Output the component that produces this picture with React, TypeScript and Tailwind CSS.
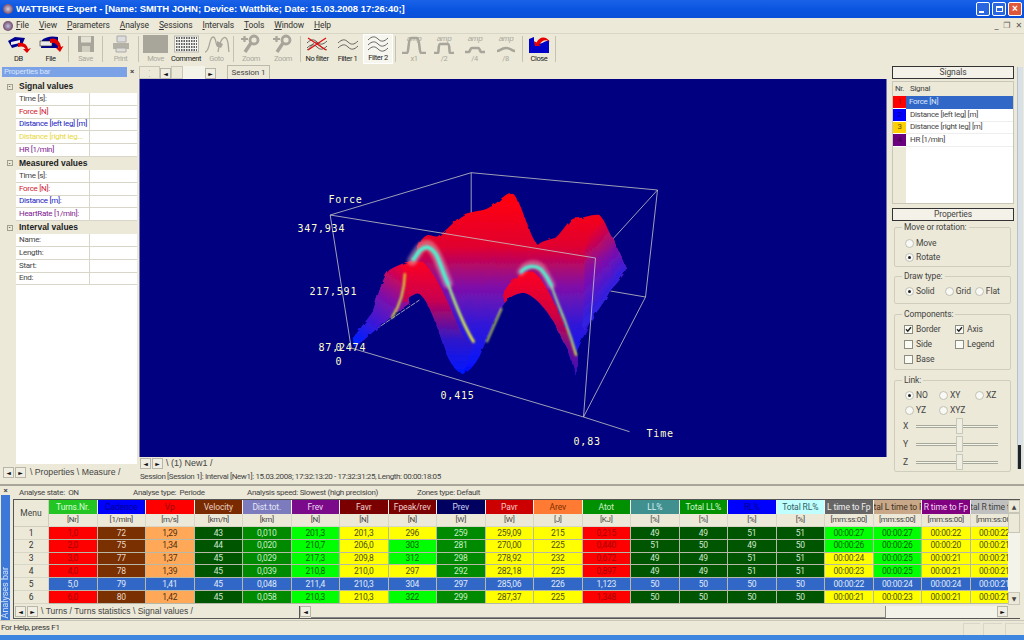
import React from "react";

const sans = "font-['Liberation_Sans',sans-serif] tracking-normal";

type Cell = { v: string; k: string };

const colours: Record<string, string> = {
  r: "bg-[#ff0000] text-[#a80000]",
  b: "bg-[#7a3000] text-[#e8d8c8]",
  o: "bg-[#ffa858] text-[#503010]",
  d: "bg-[#005500] text-[#d0e8d0]",
  g: "bg-[#008a00] text-[#c8f0c8]",
  l: "bg-[#00ff00] text-[#006000]",
  y: "bg-[#ffff00] text-[#505000]",
  s: "bg-[#3168c8] text-[#e0e8f8]",
};

const headers = [
  ["Turns.Nr.", "[Nr]", "bg-[#22c522] text-[#d8ffd8]"],
  ["Cadence", "[1/min]", "bg-[#0000ff] text-[#000090]"],
  ["Vp", "[m/s]", "bg-[#ff0000] text-[#a00000]"],
  ["Velocity", "[km/h]", "bg-[#7a2a00] text-[#e8d0c0]"],
  ["Dist.tot.", "[km]", "bg-[#7b7bbd] text-[#e8e8f8]"],
  ["Frev", "[N]", "bg-[#7a0a8a] text-[#f0d8f0]"],
  ["Favr", "[N]", "bg-[#7a0000] text-[#f0d0d0]"],
  ["Fpeak/rev", "[N]", "bg-[#7a0000] text-[#f0d0d0]"],
  ["Prev", "[W]", "bg-[#000060] text-[#d0d0f0]"],
  ["Pavr", "[W]", "bg-[#cc0000] text-[#f8c8c8]"],
  ["Arev", "[J]", "bg-[#ff7a33] text-[#803000]"],
  ["Atot", "[KJ]", "bg-[#009000] text-[#c8f0c8]"],
  ["LL%", "[%]", "bg-[#409090] text-[#d8f0f0]"],
  ["Total LL%", "[%]", "bg-[#009000] text-[#d0f8d0]"],
  ["RL%", "[%]", "bg-[#0000ff] text-[#000090]"],
  ["Total RL%", "[%]", "bg-[#c0ffff] text-[#306060]"],
  ["L time to Fp", "[mm:ss:00]", "bg-[#666666] text-[#f0f0f0]"],
  ["total L time to Fp", "[mm:ss:00]", "bg-[#c8a888] text-[#403020]"],
  ["R time to Fp", "[mm:ss:00]", "bg-[#800080] text-[#f0d8f0]"],
  ["total R time to Fp", "[mm:ss:00]", "bg-[#c0c0c0] text-[#404040]"],
];

const rowData: string[] = [
  "1,0:r 72:b 1,29:o 43:d 0,010:g 201,3:l 201,3:y 296:y 259:g 259,09:y 215:y 0,215:r 49:d 49:d 51:d 51:d 00.00.27:l 00.00.27:l 00.00.22:y 00.00.22:y",
  "2,0:r 75:b 1,34:o 44:d 0,020:g 210,7:l 206,0:y 303:l 281:g 270,00:y 225:y 0,440:r 51:d 50:d 49:d 50:d 00.00.26:l 00.00.26:l 00.00.20:y 00.00.21:y",
  "3,0:r 77:b 1,37:o 45:d 0,029:g 217,3:l 209,8:y 312:l 298:g 278,92:y 232:y 0,672:r 49:d 49:d 51:d 51:d 00.00.24:y 00.00.25:l 00.00.21:y 00.00.21:y",
  "4,0:r 78:b 1,39:o 45:d 0,039:g 210,8:l 210,0:y 297:y 292:g 282,18:y 225:y 0,897:r 49:d 49:d 51:d 51:d 00.00.23:y 00.00.25:l 00.00.21:y 00.00.21:y",
  "5,0:s 79:s 1,41:s 45:s 0,048:s 211,4:s 210,3:s 304:s 297:s 285,06:s 226:s 1,123:s 50:s 50:s 50:s 50:s 00.00.22:s 00.00.24:s 00.00.24:s 00.00.21:s",
  "6,0:r 80:b 1,42:o 45:d 0,058:g 210,3:l 210,3:y 322:l 299:g 287,37:y 225:y 1,348:r 50:d 50:d 50:d 50:d 00.00.21:y 00.00.23:y 00.00.21:y 00.00.21:y",
];

const rows: Cell[][] = rowData.map((r) =>
  r.split(" ").map((c) => {
    const [v, k] = c.split(":");
    return { v: v.replace(/\./g, ":"), k };
  })
);

function Radio({ on, label, w }: { on?: boolean; label: string; w: string }) {
  return (
    <div className={`flex items-center ${w}`}>
      <span className="flex h-[9px] w-[9px] shrink-0 items-center justify-center rounded-full border border-[#c0c0b4] bg-[#f8f8f4]">
        {on && <span className="h-[3px] w-[3px] rounded-full bg-[#222]" />}
      </span>
      <span className="ml-[2px]">{label}</span>
    </div>
  );
}

function Check({ on, label, w }: { on?: boolean; label: string; w: string }) {
  return (
    <div className={`flex items-center ${w}`}>
      <span className="flex h-[9px] w-[9px] shrink-0 items-center justify-center border border-[#8c8c80] bg-[#fbfbf6]">
        {on && (
          <svg width="7" height="7" viewBox="0 0 7 7">
            <path d="M1 3.2 L2.8 5.2 L6 1.2" fill="none" stroke="#222" strokeWidth="1.4" />
          </svg>
        )}
      </span>
      <span className="ml-[3px]">{label}</span>
    </div>
  );
}

function Group({ title, className, children }: { title: string; className: string; children: React.ReactNode }) {
  return (
    <fieldset className={`min-w-0 rounded-[2px] border border-[#cfcdbc] px-[8px] ${className}`}>
      <legend className="ml-[-1px] px-[2px] leading-[9px]">{title}</legend>
      {children}
    </fieldset>
  );
}

function Slider({ label }: { label: string }) {
  return (
    <div className="flex h-[18px] items-center">
      <span className="w-[13px]">{label}</span>
      <div className="relative h-[3px] flex-1 border-y border-y-[#a8a898] bg-[#f4f4ee]">
        <span className="absolute left-[40px] top-[-8px] h-[16px] w-[7px] border border-[#c8c8b8] bg-[#f0eee2]" />
      </div>
    </div>
  );
}

function Arrow({ dir }: { dir: "l" | "r" }) {
  return (
    <span className="flex h-[11px] w-[11px] shrink-0 items-center justify-center border border-[#b8b6a6] bg-[#f0eee2] font-['DejaVu_Sans'] text-[6px] leading-none text-[#111]">
      {dir === "l" ? "◄" : "►"}
    </span>
  );
}

function Blob() {
  return (
    <svg width="26" height="20" viewBox="0 0 26 20">
      <path d="M2 7 L9 3 L19 4 L16 11 L6 14 Z" fill="#000090" />
      <path d="M5 8 L14 6 L14 9 L5 11 Z" fill="#f0f0f0" />
      <path d="M12 9 C17 8 21 10 22 15 L25 14 L21 19 L17 15 L19.5 15 C18 12 15 12 12 13 Z" fill="#e00000" />
    </svg>
  );
}

function FileBlob() {
  return (
    <svg width="26" height="20" viewBox="0 0 26 20">
      <path d="M4 6 Q10 1 20 3 L20 14 L3 14 Z" fill="#000090" />
      <rect x="2" y="7" width="12" height="5" fill="#e8e8e8" stroke="#222" strokeWidth="0.6" />
      <path d="M12 5 C18 3 22 7 23 13 L25.5 12 L22 18 L18 14 L20.5 13.5 C19 10 16 8 12 9 Z" fill="#e00000" />
    </svg>
  );
}

function Wave({ n, cross }: { n: number; cross?: boolean }) {
  const ys = n === 2 ? [6, 11] : [3, 8, 13];
  return (
    <svg width="24" height="18" viewBox="0 0 24 18">
      {ys.map((y) => (
        <path key={y} d={`M2 ${y + 2} C6 ${y - 2} 9 ${y - 2} 12 ${y + 1} S18 ${y + 4} 22 ${y}`} fill="none" stroke={cross ? "#4a4a4a" : "#555"} strokeWidth="0.9" />
      ))}
      {cross && (
        <>
          <path d="M2 15 C7 13 8 5 12 8 S18 14 22 15" fill="none" stroke="#444" strokeWidth="0.8" />
          <path d="M3 3 L21 15 M3 15 L21 3" stroke="#e01010" strokeWidth="1.3" />
        </>
      )}
    </svg>
  );
}

function Amp({ d }: { d: string }) {
  return (
    <svg width="30" height="20" viewBox="0 0 30 20">
      <text x="15" y="7" textAnchor="middle" fontSize="8" fontStyle="italic" fontFamily="Liberation Sans" fill="#a8a69a">amp</text>
      <path d={d} fill="none" stroke="#a8a69a" strokeWidth="2.6" />
    </svg>
  );
}

function ZoomIcon() {
  return (
    <svg width="24" height="20" viewBox="0 0 24 20">
      <circle cx="15" cy="6" r="4" fill="none" stroke="#a8a69a" strokeWidth="2.8" />
      <path d="M12 9 L6 18" stroke="#a8a69a" strokeWidth="3.4" />
      <path d="M2 5 H9 M5.5 2 V8" stroke="#a8a69a" strokeWidth="2.2" />
    </svg>
  );
}

const tools: { label: string; w: string; dim?: boolean; active?: boolean; sep?: string; icon: React.ReactNode }[] = [
  { label: "DB", w: "w-[31px]", icon: <Blob /> },
  { label: "File", w: "w-[33px]", sep: "mx-[1px]", icon: <FileBlob /> },
  {
    label: "Save", w: "w-[31px]", dim: true, sep: "mx-[1px]",
    icon: (
      <svg width="20" height="20" viewBox="0 0 20 20">
        <path d="M2 2 H18 V18 H2 Z" fill="#a8a69a" />
        <rect x="5" y="2.5" width="10" height="6" fill="#e4e2d4" />
        <rect x="6" y="12" width="8" height="6" fill="#d0cebf" />
      </svg>
    ),
  },
  {
    label: "Print", w: "w-[33px]", dim: true, sep: "mx-[1px]",
    icon: (
      <svg width="20" height="20" viewBox="0 0 20 20">
        <path d="M6 2 H15 V8 H6 Z" fill="#ddd" stroke="#aaa" />
        <path d="M2 9 H18 V15 H2 Z" fill="#b4b2a6" />
        <path d="M5 14 H15 V18 H5 Z" fill="#e0dfd6" stroke="#aaa" />
      </svg>
    ),
  },
  { label: "Move", w: "w-[31px]", dim: true, icon: <span className="block h-[18px] w-[25px] bg-[#a8a69a]" /> },
  {
    label: "Comment", w: "w-[30px]",
    icon: (
      <svg width="25" height="18" viewBox="0 0 25 18">
        <rect x="0.5" y="1" width="24" height="16" fill="#f4f4f0" stroke="#b8b8b0" />
        {[3, 6, 9, 12, 15].map((y) => (
          <path key={y} d={`M2 ${y} H23`} stroke="#333" strokeWidth="1.4" strokeDasharray="1.5 1" />
        ))}
      </svg>
    ),
  },
  {
    label: "Goto", w: "w-[31px]", dim: true, sep: "mx-[1px]",
    icon: (
      <svg width="26" height="20" viewBox="0 0 26 20">
        <path d="M1 18 C6 18 5 3 9 3 C13 3 11 14 15 12 M14 18 C16 5 20 2 22 4 C25 7 24 14 25 18" fill="none" stroke="#a8a69a" strokeWidth="1.3" />
        <path d="M13 7 L19 10 L17 14 L13 12 Z" fill="#a8a69a" />
      </svg>
    ),
  },
  { label: "Zoom", w: "w-[32px]", dim: true, icon: <ZoomIcon /> },
  { label: "Zoom", w: "w-[32px]", dim: true, sep: "mx-[1px]", icon: <ZoomIcon /> },
  { label: "No filter", w: "w-[30px]", icon: <Wave n={2} cross /> },
  { label: "Filter 1", w: "w-[31px]", icon: <Wave n={2} /> },
  { label: "Filter 2", w: "w-[30px]", active: true, sep: "ml-[2px] mr-[3px]", icon: <Wave n={3} /> },
  { label: "x1", w: "w-[30px]", dim: true, icon: <Amp d="M3 19 H8 C10 19 9 4 12 4 H18 C21 4 20 19 22 19 H27" /> },
  { label: "/2", w: "w-[30px]", dim: true, icon: <Amp d="M5 19 H9 C10 19 9 10 11 10 H19 C21 10 20 19 21 19 H25" /> },
  { label: "/4", w: "w-[31px]", dim: true, icon: <Amp d="M5 18 H9 C10 18 10 14 12 14 H18 C20 14 20 18 21 18 H25" /> },
  { label: "/8", w: "w-[31px]", dim: true, sep: "mx-[1px]", icon: <Amp d="M6 17 C9 17 10 14 15 14 C20 14 21 17 24 17" /> },
  {
    label: "Close", w: "w-[30px]", sep: "mx-[1px]",
    icon: (
      <svg width="24" height="20" viewBox="0 0 24 20">
        <path d="M2 5 L7 3 V8 C10 10 14 10 17 8 L22 6 V19 H2 Z" fill="#0000c8" />
        <path d="M8 12 L7 7 L9.5 8.5 C13 2 19 2 23 8 C19 5 15 6 12 11 L14 12 Z" fill="#e80000" />
      </svg>
    ),
  },
];

const signalRows = [
  { t: "Time [s]:", c: "text-[#444]" },
  { t: "Force [N]", c: "text-[#d02030]" },
  { t: "Distance [left leg] [m]", c: "text-[#2020c0]" },
  { t: "Distance [right leg...", c: "text-[#e8d840]" },
  { t: "HR [1/min]", c: "text-[#802090]" },
];
const measuredRows = [
  { t: "Time [s]:", c: "text-[#444]" },
  { t: "Force [N]:", c: "text-[#d02030]" },
  { t: "Distance [m]:", c: "text-[#2020c0]" },
  { t: "HeartRate [1/min]:", c: "text-[#802090]" },
];
const intervalRows = ["Name:", "Length:", "Start:", "End:"].map((t) => ({ t, c: "text-[#444]" }));

function PropSection({ title, items }: { title: string; items: { t: string; c: string }[] }) {
  return (
    <>
      <div className={`flex h-[13px] items-center bg-[#ece9d8] text-[8.5px] font-bold text-[#222] ${sans}`}>
        <span className="flex w-[13px] justify-center">
          <span className="flex h-[6px] w-[6px] items-center justify-center border border-[#a0a090] text-[5px] leading-none">-</span>
        </span>
        <span className="ml-[3px]">{title}</span>
      </div>
      {items.map((i) => (
        <div key={i.t} className="flex h-[12.8px] items-center">
          <span className="h-full w-[13px] bg-[#ece9d8]" />
          <span className={`flex h-full w-[74px] items-center overflow-hidden whitespace-nowrap border-r border-b border-[#d8d6c8] pl-[3px] ${i.c}`}>{i.t}</span>
          <span className="h-full flex-1 border-b border-[#d8d6c8]" />
        </div>
      ))}
    </>
  );
}

function Chart() {
  const pale = "#ffffc8";
  const line = "#c8c8c4";
  return (
    <svg className="block h-[378px] w-full" viewBox="140 79 747 378">
      <defs>
        <linearGradient id="body" gradientUnits="userSpaceOnUse" x1="0" y1="90" x2="0" y2="610">
          <stop offset="0" stopColor="#ff0010" />
          <stop offset="0.27" stopColor="#e00030" />
          <stop offset="0.5" stopColor="#8010a8" />
          <stop offset="0.72" stopColor="#3018d8" />
          <stop offset="1" stopColor="#0010ff" />
        </linearGradient>
        <linearGradient id="flank" gradientUnits="userSpaceOnUse" x1="890" y1="200" x2="1010" y2="300">
          <stop offset="0" stopColor="#9010a0" stopOpacity="0" />
          <stop offset="0.6" stopColor="#7010b8" stopOpacity="0.9" />
          <stop offset="1" stopColor="#3020e0" />
        </linearGradient>
        <linearGradient id="frontA" gradientUnits="userSpaceOnUse" x1="0" y1="270" x2="0" y2="610">
          <stop offset="0" stopColor="#ff0020" />
          <stop offset="0.36" stopColor="#c80050" />
          <stop offset="0.7" stopColor="#3018c8" />
          <stop offset="1" stopColor="#0018ff" />
        </linearGradient>
        <linearGradient id="frontB" gradientUnits="userSpaceOnUse" x1="0" y1="300" x2="0" y2="620">
          <stop offset="0" stopColor="#ff0020" />
          <stop offset="0.42" stopColor="#d00040" />
          <stop offset="0.8" stopColor="#6010a0" />
          <stop offset="1" stopColor="#4010b0" />
        </linearGradient>
        <linearGradient id="left" gradientUnits="userSpaceOnUse" x1="340" y1="290" x2="200" y2="510">
          <stop offset="0" stopColor="#f00030" />
          <stop offset="0.4" stopColor="#8010a8" />
          <stop offset="1" stopColor="#0020ff" />
        </linearGradient>
        <linearGradient id="lowA" gradientUnits="userSpaceOnUse" x1="470" y1="330" x2="552" y2="515">
          <stop offset="0" stopColor="#80f0a0" />
          <stop offset="1" stopColor="#ffff20" />
        </linearGradient>
        <linearGradient id="lowB" gradientUnits="userSpaceOnUse" x1="775" y1="340" x2="860" y2="555">
          <stop offset="0" stopColor="#80f0b0" />
          <stop offset="1" stopColor="#f0ff20" />
        </linearGradient>
        <filter id="rough" x="-5%" y="-5%" width="110%" height="110%">
          <feTurbulence type="fractalNoise" baseFrequency="0.04" numOctaves="2" seed="4" />
          <feDisplacementMap in="SourceGraphic" scale="10" />
          <feGaussianBlur stdDeviation="2" />
        </filter>
        <filter id="soft" x="-20%" y="-20%" width="140%" height="140%">
          <feGaussianBlur stdDeviation="2.4" />
        </filter>
        <filter id="halo" x="-30%" y="-30%" width="160%" height="160%">
          <feGaussianBlur stdDeviation="5" />
        </filter>
      </defs>

      <rect x="140" y="79" width="747" height="378" fill="#000080" />

      {/* box, back edges */}
      <g stroke={line} strokeWidth="0.8" fill="none">
        <path d="M330.7 215 L471.7 172.7 L658 190 L646 297 L584 417 M471.7 172.7 L471.7 215 M596 258 L658 190 M611 291 L646 297" />
        <path d="M376.7 329 L420 300" strokeDasharray="5 1" />
      </g>

      {/* surface, drawn at 3x from the top left of the plot */}
      <g transform="translate(290 170) scale(0.33333)">
        <g filter="url(#rough)">
          <path
            d="M190 505 C215 470 240 450 250 425 C265 380 280 320 300 300 C320 285 335 285 345 278 C360 275 370 270 375 262 C385 230 395 200 415 195 C430 195 440 205 450 195 C480 175 500 145 520 135 C550 122 580 125 600 112 C625 100 645 70 665 68 C685 75 700 130 715 165 C725 195 735 215 745 225 C760 210 785 210 800 202 C820 185 835 150 855 145 C885 145 910 130 930 135 C950 155 955 185 970 205 C985 240 1000 270 1010 295 C1000 325 975 345 960 365 C945 395 925 420 905 450 C890 480 878 510 862 545 L862 620 C850 590 840 540 825 520 C800 470 780 430 760 410 C740 385 715 368 700 368 C680 370 660 380 645 400 C620 440 600 490 570 560 C555 585 540 605 520 612 C500 605 485 585 470 550 C450 490 430 430 410 395 C400 380 392 372 385 370 C370 372 355 385 340 400 C325 420 315 435 300 445 C285 460 275 470 260 478 C235 500 215 520 195 530 Z"
            fill="url(#body)"
          />
          <path d="M890 140 L930 135 C950 155 955 185 970 205 C985 240 1000 270 1010 295 C1000 325 975 345 960 365 C945 395 925 420 905 450 L880 480 Z" fill="url(#flank)" />
          <path d="M190 505 L250 425 C265 380 280 320 300 300 L345 278 L360 400 L300 445 L260 478 L195 530 Z" fill="url(#left)" />
          <path
            d="M345 278 C365 275 380 268 400 275 C430 300 460 360 490 430 C510 480 530 520 552 520 L520 612 C500 605 485 585 470 550 C450 490 430 430 410 395 C400 380 392 372 385 370 C370 372 355 385 340 400 Z"
            fill="url(#frontA)"
          />
          <path
            d="M640 370 C670 320 700 300 730 305 C760 320 790 390 815 440 C835 490 850 530 862 560 L862 620 C850 590 840 540 825 520 C800 470 780 430 760 410 C740 385 715 368 700 368 C680 370 660 380 645 400 Z"
            fill="url(#frontB)"
          />
        </g>
        <g fill="none" strokeLinecap="round">
          <path d="M368 272 C385 245 395 222 415 225 C440 235 452 285 475 340" stroke="#e0a0a8" strokeWidth="30" opacity="0.55" filter="url(#halo)" />
          <path d="M695 305 C710 282 735 275 755 292 C770 312 775 325 785 345" stroke="#e0a0a8" strokeWidth="24" opacity="0.5" filter="url(#halo)" />
          <g filter="url(#soft)">
            <path d="M475 340 C500 410 525 470 552 515" stroke="url(#lowA)" strokeWidth="8" />
            <path d="M785 345 C800 390 815 425 825 450 C840 490 850 520 860 555" stroke="url(#lowB)" strokeWidth="6" />
            <path d="M372 268 C385 250 395 230 415 232 C445 240 450 285 475 340" stroke="#50f0d0" strokeWidth="12" />
            <path d="M695 305 C710 288 735 283 755 298 C770 315 778 330 785 345" stroke="#50f0d0" strokeWidth="10" />
            <path d="M346 312 C345 350 335 400 308 442" stroke="#d8f030" strokeWidth="6" />
            <path d="M636 416 L592 515" stroke="#d8f050" strokeWidth="5" />
          </g>
        </g>
      </g>

      {/* box, front edges */}
      <g stroke={line} strokeWidth="0.8" fill="none">
        <path d="M330.7 215 L596 258 L584 417 L351.7 348 Z" />
        <path d="M584 417 L630 431.7" />
      </g>

      <g fill={pale} fontFamily="DejaVu Sans Mono" fontSize="10" letterSpacing="0.8">
        <text x="329" y="203">Force</text>
        <text x="298" y="232">347,934</text>
        <text x="310" y="295">217,591</text>
        <text x="319" y="351">87,2474</text>
        <text x="336" y="351">0</text>
        <text x="336" y="365">0</text>
        <text x="441" y="399">0,415</text>
        <text x="574" y="445">0,83</text>
        <text x="647" y="437">Time</text>
      </g>
    </svg>
  );
}

export default function App() {
  return (
    <div className="flex h-[640px] w-[1024px] flex-col overflow-hidden bg-[#ece9d8] font-['Roboto','Liberation_Sans',sans-serif] text-[8px] leading-none tracking-[-0.3px] text-[#444]">
      {/* title bar */}
      <div className={`flex h-[18px] shrink-0 items-center bg-gradient-to-b from-[#1a62e8] via-[#0a55e0] to-[#0b4fd8] pl-[3px] pr-[2px] ${sans}`}>
        <span className="h-[10px] w-[10px] rounded-full bg-[radial-gradient(circle,#d0d0e0,#602040)]" />
        <span className="ml-[3px] whitespace-nowrap text-[9.5px] font-bold tracking-[-0.03px] text-white">WATTBIKE Expert - [Name: SMITH JOHN; Device: Wattbike; Date: 15.03.2008 17:26:40;]</span>
        <div className="ml-auto flex gap-[2px]">
          <span className="flex h-[14px] w-[14px] items-end justify-start rounded-[2px] border border-white bg-[#2a66e0] p-[2px]"><span className="h-[2px] w-[5px] bg-white" /></span>
          <span className="flex h-[14px] w-[14px] items-center justify-center rounded-[2px] border border-white bg-[#2a66e0]"><span className="h-[6px] w-[7px] border border-t-2 border-white" /></span>
          <span className="flex h-[14px] w-[14px] items-center justify-center rounded-[2px] border border-white bg-[#e0583a] text-[10px] font-bold text-white">×</span>
        </div>
      </div>

      {/* menu */}
      <div className="flex h-[15px] shrink-0 items-center gap-[10px] pl-[3px] text-[8.5px] tracking-[-0.1px] text-[#333]">
        <div className="flex items-center gap-[3px]">
          <span className="h-[10px] w-[10px] rounded-full bg-[radial-gradient(circle,#c0c0e0,#501838)]" />
          <span><u>F</u>ile</span>
        </div>
        <span><u>V</u>iew</span>
        <span><u>P</u>arameters</span>
        <span><u>A</u>nalyse</span>
        <span><u>S</u>essions</span>
        <span><u>I</u>ntervals</span>
        <span><u>T</u>ools</span>
        <span><u>W</u>indow</span>
        <span><u>H</u>elp</span>
        <div className="ml-auto flex gap-[5px] pr-[2px] font-['DejaVu_Sans'] text-[8px] text-[#555]">
          <span>_</span>
          <span>❐</span>
          <span>✕</span>
        </div>
      </div>

      {/* toolbar */}
      <div className="flex h-[31px] shrink-0 items-stretch border-t border-t-[#d8d6c6] pl-[3px] text-[7.5px] tracking-[-0.4px]">
        {tools.map((t, i) => (
          <React.Fragment key={i}>
            <div className={`flex ${t.w} flex-col items-center justify-end pb-[2px] ${t.active ? "border border-[#fff] bg-[#f6f5ee]" : ""}`}>
              <span className="flex h-[20px] items-center justify-center">{t.icon}</span>
              <span className={`mt-[1px] whitespace-nowrap ${t.dim ? "text-[#aaa89c]" : "text-[#222]"}`}>{t.label}</span>
            </div>
            {t.sep && <span className={`my-[2px] w-px bg-[#c4c2b2] ${t.sep}`} />}
          </React.Fragment>
        ))}
      </div>

      {/* main */}
      <div className="flex h-[420px] shrink-0">
        {/* left panel */}
        <div className="flex w-[139px] shrink-0 flex-col pl-[2px] pt-[3px]">
          <div className="flex h-[10px] shrink-0">
            <div className="w-[125px] bg-[#7ba2e7] pl-[2px] leading-[10px] text-[#d8e4fa]">Properties bar</div>
            <span className="ml-[3px] text-[8px] font-bold leading-[10px]">×</span>
          </div>
          <div className="ml-[1px] mr-[2px] mt-[3px] flex h-[384px] flex-col bg-white">
            <PropSection title="Signal values" items={signalRows} />
            <PropSection title="Measured values" items={measuredRows} />
            <PropSection title="Interval values" items={intervalRows} />
            <div className="flex flex-1">
              <span className="w-[13px] bg-[#ece9d8]" />
            </div>
          </div>
          <div className={`mt-[3px] flex items-center gap-[1px] pl-[1px] text-[8.7px] ${sans}`}>
            <Arrow dir="l" />
            <Arrow dir="r" />
            <span className="ml-[3px] whitespace-nowrap">\&nbsp;Properties&nbsp;\&nbsp;Measure&nbsp;/</span>
          </div>
        </div>

        {/* center */}
        <div className="flex w-[748px] shrink-0 flex-col">
          <div className="flex h-[15px] shrink-0 items-end">
            <span className="flex h-[13px] w-[21px] flex-col items-center justify-between border border-[#c8c6b6] text-[6px]">
              <span className="leading-[5px]">·</span>
              <span className="leading-[5px]">·</span>
            </span>
            <Arrow dir="l" />
            <span className="h-[13px] w-[12px] border border-[#c8c6b6]" />
            <span className="h-[13px] w-[22px] bg-[#f4f3ea]" />
            <Arrow dir="r" />
            <span className="ml-[11px] flex h-[14px] w-[43px] items-center justify-center border-x border-t border-[#bbb9a9] tracking-[-0.1px]">Session 1</span>
          </div>
          <Chart />
          <div className={`flex h-[13px] shrink-0 items-center gap-[1px] pl-[1px] text-[9px] ${sans}`}>
            <Arrow dir="l" />
            <Arrow dir="r" />
            <span className="ml-[2px] whitespace-nowrap">\&nbsp;(1) New1&nbsp;/</span>
          </div>
          <div className="mt-[3px] whitespace-nowrap pl-[1px] tracking-[-0.38px]">Session [Session 1]: Interval [New1]: 15.03.2008; 17:32:13:20 - 17:32:31:25, Length: 00:00:18:05</div>
        </div>

        {/* right panel */}
        <div className="ml-[5px] flex w-[122px] shrink-0 flex-col pt-[2px]">
          <div className="flex h-[13px] shrink-0 items-center justify-center border border-[#333] bg-[#f4f2e8] text-[8.5px] tracking-[-0.1px]">Signals</div>
          <div className="mt-[2px] flex h-[123px] shrink-0 border border-[#c8c6b6] bg-white">
            <div className="flex w-[13px] flex-col bg-[#ece9d8]">
              <span className="flex h-[14px] items-center justify-center">Nr.</span>
              {["bg-[#ff0000] text-[#a00000]", "bg-[#0000ff] text-[#000090]", "bg-[#ffd000] text-[#605000]", "bg-[#6a0080] text-[#380040]"].map((c, i) => (
                <span key={c} className={`flex h-[12.8px] items-center justify-center border-b border-b-white ${c}`}>{i + 1}</span>
              ))}
            </div>
            <div className="flex flex-1 flex-col">
              <span className="flex h-[14px] items-center bg-[#ece9d8] pl-[4px]">Signal</span>
              <span className="flex h-[12.8px] items-center bg-[#3168c8] pl-[3px] text-[#dde6f8]">Force [N]</span>
              {["Distance [left leg] [m]", "Distance [right leg] [m]", "HR [1/min]"].map((s) => (
                <span key={s} className="flex h-[12.8px] items-center border-b border-[#eee] pl-[4px]">{s}</span>
              ))}
            </div>
          </div>
          <div className="mt-[4px] flex h-[13px] shrink-0 items-center justify-center border border-[#333] bg-[#f4f2e8] text-[8.5px] tracking-[-0.1px]">Properties</div>

          <div className="flex flex-col pl-[2px] pr-[3px] pt-[2px] text-[8.5px] tracking-[-0.1px]">
            <Group title="Move or rotation:" className="h-[44px]">
              <div className="flex flex-col gap-[5px] pl-[2px] pt-[7px]">
                <Radio label="Move" w="w-full" />
                <Radio on label="Rotate" w="w-full" />
              </div>
            </Group>
            <Group title="Draw type:" className="mt-[5px] h-[32px]">
              <div className="flex pl-[2px] pt-[6px]">
                <Radio on label="Solid" w="w-[41px]" />
                <Radio label="Grid" w="w-[31px]" />
                <Radio label="Flat" w="w-[28px]" />
              </div>
            </Group>
            <Group title="Components:" className="mt-[6px] h-[60px]">
              <div className="grid grid-cols-[51px_1fr] gap-y-[6px] pl-[1px] pt-[6px]">
                <Check on label="Border" w="" />
                <Check on label="Axis" w="" />
                <Check label="Side" w="" />
                <Check label="Legend" w="" />
                <Check label="Base" w="" />
              </div>
            </Group>
            <Group title="Link:" className="mt-[6px] h-[96px]">
              <div className="grid grid-cols-[34px_36px_1fr] gap-y-[6px] pl-[2px] pt-[6px]">
                <Radio on label="NO" w="" />
                <Radio label="XY" w="" />
                <Radio label="XZ" w="" />
                <Radio label="YZ" w="" />
                <Radio label="XYZ" w="" />
              </div>
              <div className="mt-[2px] pr-[4px]">
                <Slider label="X" />
                <Slider label="Y" />
                <Slider label="Z" />
              </div>
            </Group>
          </div>
        </div>

        {/* far right strip */}
        <div className="ml-[3px] flex w-[6px] shrink-0 flex-col justify-end pb-[15px] pt-[3px]">
          <div className="flex flex-1 flex-col justify-end border-l border-[#b8c0cc] bg-[#d8e0e8]">
            <span className="h-[24px] w-[3px] bg-[#222]" />
          </div>
        </div>
      </div>

      {/* bottom: analyses */}
      <div className="flex h-[136px] shrink-0 border-t-2 border-t-[#a8a698]">
        <div className="flex w-[11px] shrink-0 flex-col items-center">
          <span className="h-[9px] text-[8px] font-bold leading-[9px]">×</span>
          <div className="flex w-[9px] flex-1 items-end justify-center bg-[#3c78d8] pb-[2px]">
            <span className="rotate-180 whitespace-nowrap text-[9px] tracking-normal text-[#cfe0f8] [writing-mode:vertical-rl]">Analyses bar</span>
          </div>
        </div>
        <div className="flex w-[1009px] flex-col">
          <div className="flex h-[13px] shrink-0 items-center whitespace-nowrap">
            <span className="ml-[8px] w-[114px]">Analyse state:&nbsp; ON</span>
            <span className="w-[114px]">Analyse type:&nbsp; Periode</span>
            <span className="w-[170px]">Analysis speed: Slowest (high precision)</span>
            <span>Zones type: Default</span>
          </div>
          <div className="ml-[2px] flex h-[106px] shrink-0 border-l border-t border-[#555]">
            <div className="w-[994px] overflow-hidden">
              <div className="grid w-[1005px] grid-cols-[35px_repeat(20,48.5px)] grid-rows-[14px_13px_repeat(6,12.83px)]">
                <div className="row-span-2 flex items-center justify-center border-r border-b border-[#cfcdbd] text-[8.5px] tracking-normal">Menu</div>
                {headers.map((h) => (
                  <div key={h[0]} className={`flex items-center justify-center overflow-hidden whitespace-nowrap border-r border-[#f4f3ea] text-[8.5px] tracking-[-0.1px] ${h[2]}`}>{h[0]}</div>
                ))}
                {headers.map((h) => (
                  <div key={h[0]} className="flex items-center justify-center overflow-hidden whitespace-nowrap border-r border-b border-[#d8d6c6]">{h[1]}</div>
                ))}
                {rows.map((r, i) => (
                  <React.Fragment key={i}>
                    <div className="flex items-center justify-center border-r border-b border-[#d8d6c6] text-[8.5px] text-[#333]">{i + 1}</div>
                    {r.map((c, j) => (
                      <div key={j} className={`flex items-center justify-center border-r border-b border-[#b8b8a8] text-[8.5px] ${colours[c.k]}`}>{c.v}</div>
                    ))}
                  </React.Fragment>
                ))}
              </div>
            </div>
            <div className="flex w-[12px] flex-col bg-[#f4f3ea]">
              <span className="flex h-[13px] items-center justify-center border border-[#c8c6b6] bg-[#ece9d8] font-['DejaVu_Sans'] text-[6px]">▲</span>
              <span className="h-[20px] border border-[#c8c6b6] bg-[#ece9d8]" />
              <span className="mt-auto flex h-[13px] items-center justify-center border border-[#c8c6b6] bg-[#ece9d8] font-['DejaVu_Sans'] text-[6px]">▼</span>
            </div>
          </div>
          <div className="ml-[2px] flex h-[14px] shrink-0 items-center border-b border-l border-[#555]">
            <div className="flex gap-[1px] pl-[1px]">
              <Arrow dir="l" />
              <Arrow dir="r" />
            </div>
            <span className={`ml-[3px] w-[258px] whitespace-nowrap text-[8.5px] ${sans}`}>\&nbsp;Turns&nbsp;/&nbsp;Turns statistics&nbsp;\&nbsp;Signal values&nbsp;/</span>
            <div className="flex flex-1 items-center border-l border-[#555]">
              <Arrow dir="l" />
              <span className="h-[12px] w-[575px] border-r border-b border-[#888] bg-[#ece9d8]" />
              <span className="h-[12px] flex-1 bg-[#f4f3ea]" />
              <Arrow dir="r" />
              <span className="w-[12px]" />
            </div>
          </div>
        </div>
      </div>

      {/* status bar */}
      <div className="flex h-[15px] shrink-0 items-center border-t border-[#c8c6b6] pl-[1px] text-[#333]">
        <span>For Help, press F1</span>
        <div className="ml-auto flex h-full gap-[3px] pt-[2px]">
          <span className="w-[17px] border-l border-t border-[#d8d6c6]" />
          <span className="w-[19px] border-l border-t border-[#d8d6c6]" />
          <span className="w-[19px] border-l border-t border-[#d8d6c6]" />
        </div>
      </div>
      <div className="flex-1 bg-[#3c86e0]" />
    </div>
  );
}
